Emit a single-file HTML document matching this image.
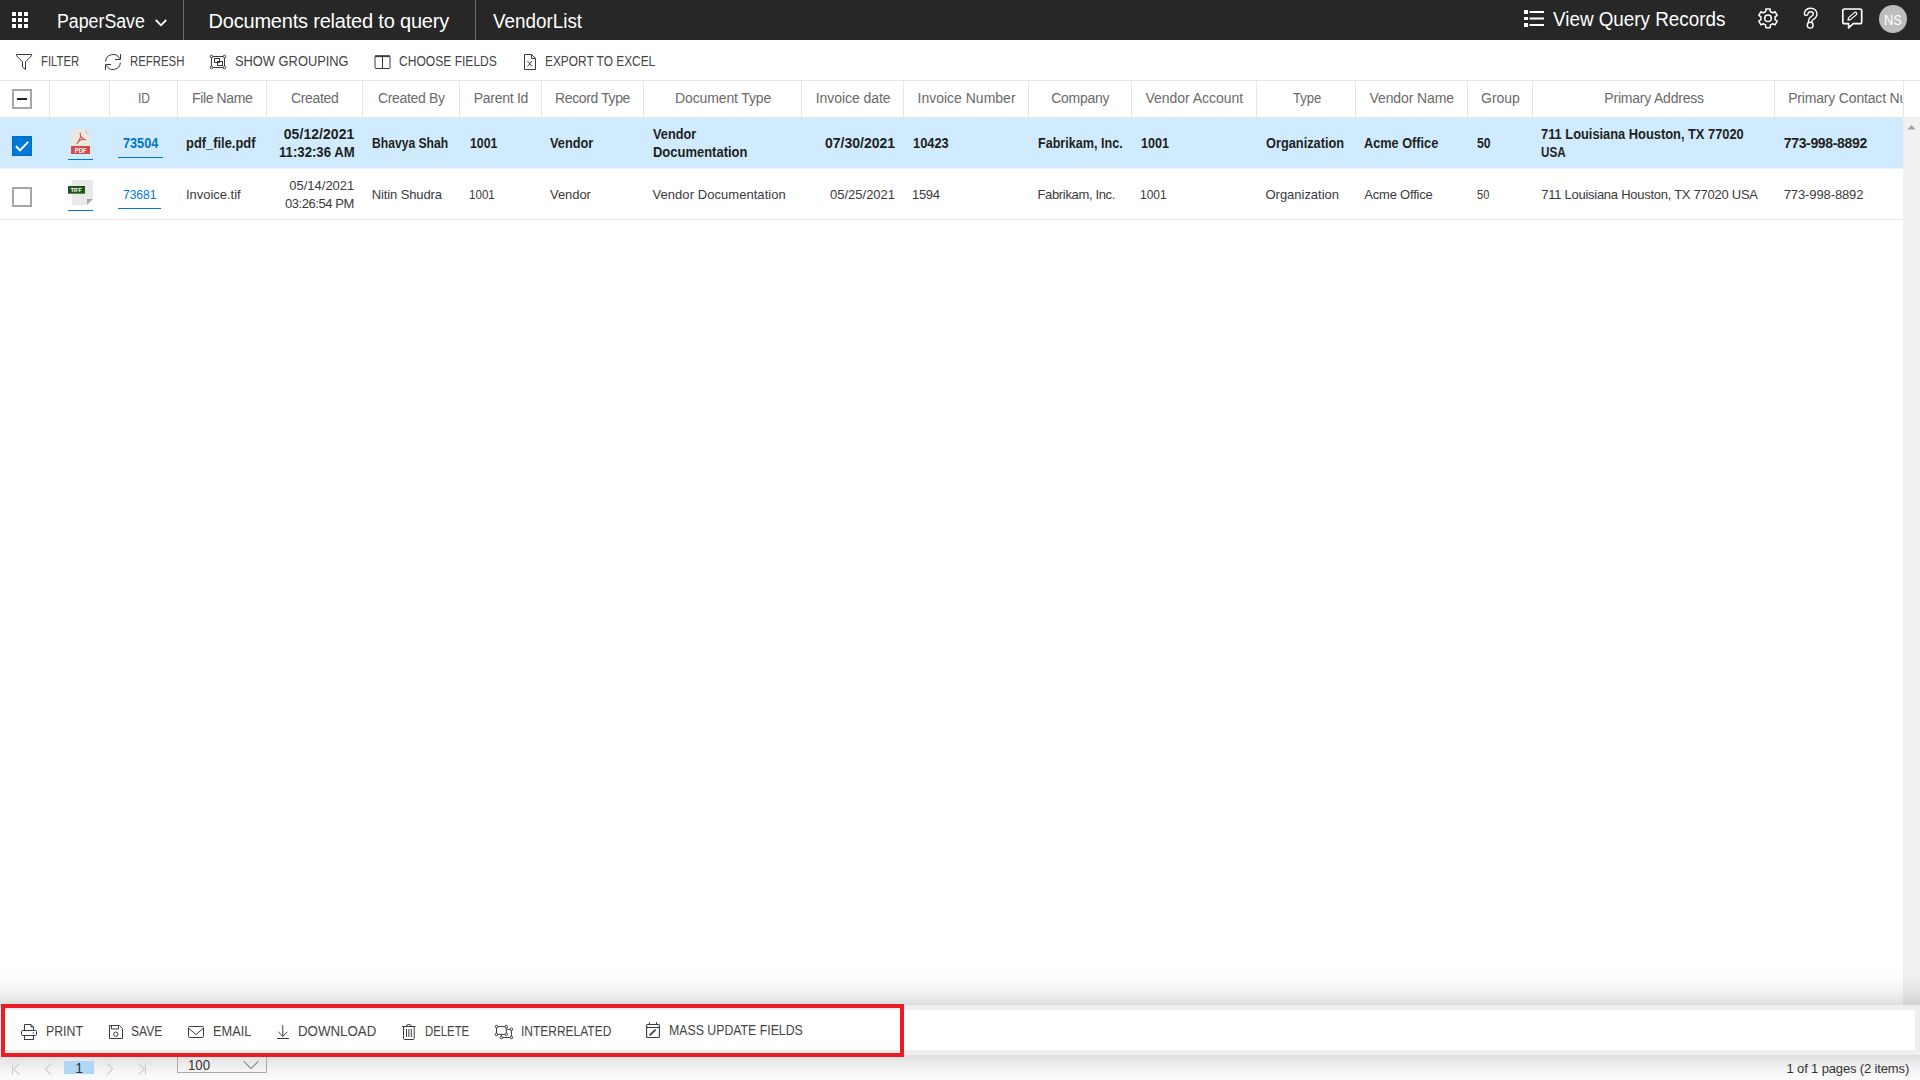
<!DOCTYPE html>
<html>
<head>
<meta charset="utf-8">
<title>PaperSave - Documents related to query</title>
<style>
html,body{margin:0;padding:0;}
body{width:1920px;height:1080px;overflow:hidden;background:#fff;position:relative;font-family:"Liberation Sans",sans-serif;}
.a{position:absolute;}
.t{position:absolute;white-space:pre;line-height:20px;height:20px;transform-origin:0 50%;}
#top{left:0;top:0;width:1920px;height:40px;background:#272727;}
.sep{position:absolute;top:0;width:1px;height:40px;background:#6a6a6a;}
.hb{position:absolute;top:81px;width:1px;height:36px;background:#e6e6e6;}
.hl{position:absolute;height:1px;background:#e6e6e6;}
.cb{position:absolute;box-sizing:border-box;width:20px;height:20px;border:2px solid #a6a6a6;background:#fff;}
.ul{position:absolute;height:1px;background:#0078d7;}
svg{position:absolute;overflow:visible;}
</style>
</head>
<body>
<!-- top bar -->
<div id="top" class="a"></div>
<div class="sep" style="left:183px"></div>
<div class="sep" style="left:475px"></div>
<svg style="left:0;top:0" width="1920" height="40" viewBox="0 0 1920 40">
<rect x="12" y="12" width="4" height="4" fill="#fff"/>
<rect x="18" y="12" width="4" height="4" fill="#fff"/>
<rect x="24" y="12" width="4" height="4" fill="#fff"/>
<rect x="12" y="18" width="4" height="4" fill="#fff"/>
<rect x="18" y="18" width="4" height="4" fill="#fff"/>
<rect x="24" y="18" width="4" height="4" fill="#fff"/>
<rect x="12" y="24" width="4" height="4" fill="#fff"/>
<rect x="18" y="24" width="4" height="4" fill="#fff"/>
<rect x="24" y="24" width="4" height="4" fill="#fff"/>
<path d="M155.8 20 L161 25.3 L166.2 20" fill="none" stroke="#fff" stroke-width="1.8"/>
<rect x="1524" y="10" width="4" height="4" fill="#fff"/>
<rect x="1524" y="17" width="4" height="3" fill="#fff"/>
<rect x="1524" y="23" width="4" height="4" fill="#fff"/>
<rect x="1529.5" y="11" width="14.5" height="2" fill="#fff"/>
<rect x="1529.5" y="17.5" width="14.5" height="2" fill="#fff"/>
<rect x="1529.5" y="24" width="14.5" height="2" fill="#fff"/>
<path d="M1765.66 11.49 L1765.84 8.95 L1770.16 8.95 L1770.34 11.49 L1772.72 12.87 L1775.02 11.75 L1777.18 15.49 L1775.07 16.93 L1775.07 19.67 L1777.18 21.11 L1775.02 24.85 L1772.72 23.73 L1770.34 25.11 L1770.16 27.65 L1765.84 27.65 L1765.66 25.11 L1763.28 23.73 L1760.98 24.85 L1758.82 21.11 L1760.93 19.67 L1760.93 16.93 L1758.82 15.49 L1760.98 11.75 L1763.28 12.87 Z" fill="none" stroke="#fff" stroke-width="1.5" stroke-linejoin="round"/>
<circle cx="1768" cy="18.3" r="3.3" fill="none" stroke="#fff" stroke-width="1.5"/>
<path d="M1806.2 13.6 C1806.6 11 1808.6 10 1810.6 10 C1813.4 10 1815.2 11.8 1815.2 14 C1815.2 16.2 1813.6 17.2 1812 18.2 C1810.6 19.1 1810.2 19.8 1810.2 21.2" fill="none" stroke="#fff" stroke-width="5" stroke-linecap="round" stroke-linejoin="round"/>
<path d="M1806.2 13.6 C1806.6 11 1808.6 10 1810.6 10 C1813.4 10 1815.2 11.8 1815.2 14 C1815.2 16.2 1813.6 17.2 1812 18.2 C1810.6 19.1 1810.2 19.8 1810.2 21.2" fill="none" stroke="#272727" stroke-width="2.2" stroke-linecap="round" stroke-linejoin="round"/>
<circle cx="1810.2" cy="25.2" r="2.9" fill="#272727" stroke="#fff" stroke-width="1.4"/>
<path d="M1844.5 9 H1860 Q1861.7 9 1861.7 10.7 V22 Q1861.7 23.7 1860 23.7 H1853.2 L1848.6 28 V23.7 H1844.5 Q1842.8 23.7 1842.8 22 V10.7 Q1842.8 9 1844.5 9 Z" fill="none" stroke="#fff" stroke-width="1.7" stroke-linejoin="round"/>
<path d="M1848 20.2 L1848.6 17.6 L1854.6 12.4 Q1855.6 11.8 1856.4 12.8 Q1857.2 13.8 1856.4 14.6 L1850.4 19.6 Z" fill="none" stroke="#fff" stroke-width="1.2" stroke-linejoin="round"/>
<circle cx="1893" cy="19" r="14" fill="#bdbdbd"/>
</svg>
<!-- grid header -->
<div class="hl" style="left:0;top:80px;width:1920px"></div>
<div class="hl" style="left:0;top:117px;width:1920px"></div>
<div class="hb" style="left:49px"></div><div class="hb" style="left:109px"></div><div class="hb" style="left:177px"></div><div class="hb" style="left:266px"></div><div class="hb" style="left:362px"></div><div class="hb" style="left:459px"></div><div class="hb" style="left:541px"></div><div class="hb" style="left:643px"></div><div class="hb" style="left:801px"></div><div class="hb" style="left:903px"></div><div class="hb" style="left:1028px"></div><div class="hb" style="left:1131px"></div><div class="hb" style="left:1256px"></div><div class="hb" style="left:1355px"></div><div class="hb" style="left:1467px"></div><div class="hb" style="left:1532px"></div><div class="hb" style="left:1774px"></div><div class="hb" style="left:1903px"></div>
<!-- rows -->
<div class="a" style="left:0;top:118px;width:1903px;height:50px;background:#d0ebfd"></div>
<div class="hl" style="left:0;top:168px;width:1903px;background:#eaf3fa"></div>
<div class="hl" style="left:0;top:219px;width:1903px;background:#e9e9e9"></div>
<!-- scrollbar -->
<div class="a" style="left:1903px;top:118px;width:17px;height:887px;background:#f1f1f1"></div>
<svg style="left:1907px;top:124px" width="9" height="6" viewBox="0 0 9 6"><path d="M0.5 5.5 L4.5 1 L8.5 5.5 Z" fill="#a3a3a3"/></svg>
<!-- checkboxes -->
<div class="cb" style="left:12px;top:89px"></div>
<div class="a" style="left:17px;top:98px;width:10px;height:2px;background:#222"></div>
<div class="a" style="left:12px;top:136px;width:20px;height:20px;background:#0078d7;box-sizing:border-box;border:1px solid #006cc4"></div>
<svg style="left:12px;top:136px" width="20" height="20" viewBox="0 0 20 20"><path d="M3.9 10.3 L8 14.3 L16.2 5.9" fill="none" stroke="#fff" stroke-width="1.9"/></svg>
<div class="cb" style="left:12px;top:187px"></div>
<!-- link underlines -->
<div class="ul" style="left:68px;top:159px;width:25px"></div>
<div class="ul" style="left:118px;top:157px;width:45px"></div>
<div class="ul" style="left:68px;top:210px;width:25px"></div>
<div class="ul" style="left:118px;top:208px;width:43px"></div>
<svg style="left:0;top:118px" width="200" height="102" viewBox="0 118 200 102">
<path d="M71 129 H85 L90 134 V146 H71 Z" fill="#e9e9e1"/>
<path d="M85 129 L90 134 H85 Z" fill="#d9d9cb"/>
<rect x="71" y="146" width="19" height="8" fill="#d14b4b"/>
<path d="M80.2 133.2 C81.2 136 80 139.8 77 143.4 M80.2 133.2 C79.6 136 82 138.8 85.4 139.8 M78 141.8 C80 139.8 83 139 85.4 139.8" fill="none" stroke="#d45555" stroke-width="1.15" stroke-linecap="round"/>
<text x="80.6" y="152.9" font-family="Liberation Sans, sans-serif" font-size="6.6" font-weight="700" fill="#fff" text-anchor="middle" textLength="11.6" lengthAdjust="spacingAndGlyphs">PDF</text>
<path d="M72 180 H93 V199 L87 205 H72 Z" fill="#e9e9e9"/>
<path d="M87 199 H93 L87 205 Z" fill="#a9a9a9"/>
<rect x="68" y="186" width="17" height="7.7" fill="#1f5519"/>
<text x="76.2" y="192.4" font-family="Liberation Sans, sans-serif" font-size="5.8" font-weight="700" fill="#fff" text-anchor="middle" textLength="11" lengthAdjust="spacingAndGlyphs">TIFF</text>
</svg>
<!-- bottom shadow + bar -->
<div class="a" style="left:-60px;top:1005px;width:2040px;height:50px;box-shadow:0 0 34px rgba(0,0,0,0.26)"></div>
<!-- pager -->
<div class="a" style="left:64px;top:1061px;width:30px;height:13px;background:#b2d6f5"></div>
<div class="a" style="left:177px;top:1050px;width:90px;height:23px;box-sizing:border-box;border:1px solid #ababab"></div>
<div class="a" style="left:0;top:1005px;width:1920px;height:50px;background:#eeeeee"></div>
<div class="a" style="left:5px;top:1010px;width:1910px;height:40px;background:#fff"></div>
<svg style="left:0;top:1057px" width="300" height="23" viewBox="0 1057 300 23" fill="none" stroke="#cfcfcf" stroke-width="1.1">
<path d="M12.5 1063 V1075 M19.5 1063.3 L13.5 1069 L19.5 1074.7"/>
<path d="M51 1063.3 L45.5 1069 L51 1074.7"/>
<path d="M107.2 1063.3 L112.7 1069 L107.2 1074.7"/>
<path d="M145.5 1063 V1075 M138.5 1063.3 L144.5 1069 L138.5 1074.7"/>
<path d="M243.6 1061.2 L251 1068.5 L258.4 1061.2" stroke="#555" stroke-width="1"/>
</svg>
<!-- red annotation -->
<div class="a" style="left:1px;top:1004px;width:903px;height:53px;box-sizing:border-box;border:4px solid #ed1c24"></div>
<svg style="left:0;top:1010px" width="1920" height="40" viewBox="0 1010 1920 40" fill="none" stroke="#3b3b3b" stroke-width="1">
<rect x="21.5" y="1030.5" width="15" height="5" rx="1"/>
<path d="M24.5 1030.5 V1024.5 H31 L33.5 1027 V1030.5"/>
<path d="M31 1024.5 V1027 H33.5"/>
<path d="M24.5 1035.5 V1039.5 H33.5 V1035.5" />
<rect x="24.5" y="1035.5" width="9" height="4" fill="#fff"/>
<rect x="32.8" y="1032.2" width="1" height="1.4" fill="#3b3b3b" stroke="none"/>
<path d="M109.5 1025.5 H119.5 L122.5 1028.5 V1038.5 H109.5 Z" stroke-linejoin="round"/>
<path d="M111.5 1025.5 V1029 H118.5 V1025.5"/>
<circle cx="115.8" cy="1034.2" r="2.2"/>
<rect x="188.5" y="1026.5" width="15" height="11" rx="1"/>
<path d="M188.7 1028.3 L196 1034.5 L203.3 1028.3"/>
<path d="M282.8 1025.2 V1036.3 M278.2 1031.8 L282.8 1036.4 L287.4 1031.8 M277 1038.5 H289"/>
<path d="M402 1026.5 H415.6"/>
<path d="M406.3 1026.3 Q406.3 1024.5 408.8 1024.5 Q411.3 1024.5 411.3 1026.3"/>
<path d="M403.5 1026.7 V1038.5 Q403.5 1039.5 404.5 1039.5 H413.2 Q414.2 1039.5 414.2 1038.5 V1026.7"/>
<path d="M406.5 1029 V1037 M408.9 1029 V1037 M411.3 1029 V1037"/>
<rect x="501.4" y="1029.3" width="10" height="8.2"/>
<rect x="496.5" y="1026.6" width="9.8" height="7.8" fill="#fff"/>
<circle cx="496.5" cy="1026.6" r="1.3" fill="#fff"/>
<circle cx="506.3" cy="1026.6" r="1.3" fill="#fff"/>
<circle cx="496.5" cy="1034.4" r="1.3" fill="#fff"/>
<circle cx="506.3" cy="1034.4" r="1.3" fill="#fff"/>
<circle cx="511.4" cy="1029.3" r="1.3" fill="#fff"/>
<circle cx="511.4" cy="1037.5" r="1.3" fill="#fff"/>
<circle cx="501.4" cy="1037.5" r="1.3" fill="#fff"/>
<rect x="646.6" y="1024.5" width="12.8" height="13" rx="1" stroke-width="1.1"/>
<path d="M646.6 1027.5 H659.4" stroke-width="1.1"/>
<path d="M649.4 1022.2 V1024.5 M656.5 1022.2 V1024.5"/>
<path d="M649.6 1035.4 L655.6 1029.6" stroke-width="1.6"/>
</svg>
<svg style="left:0;top:40px" width="1920" height="40" viewBox="0 40 1920 40" fill="none" stroke="#3b3b3b" stroke-width="1">
<path d="M16.5 54.5 H31.5 V55.8 L25.5 61.8 V69.6 L22.5 67 V61.8 L16.5 55.8 Z" stroke-linejoin="miter"/>
<path d="M105.6 61.6 A7.4 7.4 0 0 1 119.6 58.6"/>
<path d="M120.5 54 V59.5 H115"/>
<path d="M120.4 62.6 A7.4 7.4 0 0 1 106.4 65.4"/>
<path d="M105.5 70 V64.5 H111"/>
<rect x="211.5" y="56.5" width="13" height="11"/>
<rect x="214.5" y="58.5" width="5" height="4"/>
<rect x="217.5" y="61.5" width="5" height="4"/>
<circle cx="211.5" cy="56.5" r="1.3" fill="#fff"/>
<circle cx="224.5" cy="56.5" r="1.3" fill="#fff"/>
<circle cx="211.5" cy="67.5" r="1.3" fill="#fff"/>
<circle cx="224.5" cy="67.5" r="1.3" fill="#fff"/>
<rect x="375" y="56" width="15" height="12.5" rx="1"/>
<rect x="375" y="55.3" width="15" height="1.8" fill="#3b3b3b" stroke="none"/>
<path d="M382.5 57 V68.5"/>
<path d="M524.5 54.5 H531.5 L535.5 58.5 V69.5 H524.5 Z" stroke-linejoin="round"/>
<path d="M531.5 54.5 V58.5 H535.5"/>
<path d="M527.5 61 L532 66.5 M532 61 L527.5 66.5"/>
</svg>
<div class="t" style="left:57.11px;top:11px;font-size:20px;color:#fff;transform:scaleX(0.8878);">PaperSave</div>
<div class="t" style="left:208.5px;top:11px;font-size:20px;color:#fff;letter-spacing:-0.2px;">Documents related to query</div>
<div class="t" style="left:493.0px;top:11px;font-size:20px;color:#fff;transform:scaleX(0.9421);">VendorList</div>
<div class="t" style="left:1553.0px;top:9px;font-size:20px;color:#fff;transform:scaleX(0.9415);">View Query Records</div>
<div class="t" style="left:1884.0px;top:9.6px;font-size:15px;color:#fff;transform:scaleX(0.8571);">NS</div>
<div class="t" style="left:41.0px;top:51px;font-size:14px;color:#444;transform:scaleX(0.8085);">FILTER</div>
<div class="t" style="left:129.5px;top:51px;font-size:14px;color:#444;transform:scaleX(0.8134);">REFRESH</div>
<div class="t" style="left:235.0px;top:51px;font-size:14px;color:#444;transform:scaleX(0.9187);">SHOW GROUPING</div>
<div class="t" style="left:398.75px;top:51px;font-size:14px;color:#444;transform:scaleX(0.8618);">CHOOSE FIELDS</div>
<div class="t" style="left:544.5px;top:51px;font-size:14px;color:#444;transform:scaleX(0.85);">EXPORT TO EXCEL</div>
<div class="t" style="left:138.0px;top:88px;font-size:14px;color:#6a6a6a;transform:scaleX(0.8571);">ID</div>
<div class="t" style="left:192.0px;top:88px;font-size:14px;color:#6a6a6a;letter-spacing:-0.375px;">File Name</div>
<div class="t" style="left:291.0px;top:88px;font-size:14px;color:#6a6a6a;letter-spacing:-0.333px;">Created</div>
<div class="t" style="left:378.0px;top:88px;font-size:14px;color:#6a6a6a;letter-spacing:-0.333px;">Created By</div>
<div class="t" style="left:473.75px;top:88px;font-size:14px;color:#6a6a6a;letter-spacing:-0.282px;">Parent Id</div>
<div class="t" style="left:555.0px;top:88px;font-size:14px;color:#6a6a6a;letter-spacing:-0.375px;">Record Type</div>
<div class="t" style="left:675.0px;top:88px;font-size:14px;color:#6a6a6a;letter-spacing:-0.125px;">Document Type</div>
<div class="t" style="left:815.75px;top:88px;font-size:14px;color:#6a6a6a;letter-spacing:-0.069px;">Invoice date</div>
<div class="t" style="left:917.5px;top:88px;font-size:14px;color:#6a6a6a;">Invoice Number</div>
<div class="t" style="left:1051.25px;top:88px;font-size:14px;color:#6a6a6a;letter-spacing:-0.292px;">Company</div>
<div class="t" style="left:1145.5px;top:88px;font-size:14px;color:#6a6a6a;letter-spacing:-0.038px;">Vendor Account</div>
<div class="t" style="left:1292.5px;top:88px;font-size:14px;color:#6a6a6a;transform:scaleX(0.9333);">Type</div>
<div class="t" style="left:1369.6px;top:88px;font-size:14px;color:#6a6a6a;letter-spacing:-0.12px;">Vendor Name</div>
<div class="t" style="left:1481.0px;top:88px;font-size:14px;color:#6a6a6a;">Group</div>
<div class="t" style="left:1604.3px;top:88px;font-size:14px;color:#6a6a6a;letter-spacing:-0.207px;">Primary Address</div>
<div class="t" style="left:123.0px;top:133px;font-size:14px;color:#0074d2;font-weight:700;transform:scaleX(0.9062);">73504</div>
<div class="t" style="left:186.0px;top:133px;font-size:14px;color:#1f1f1f;font-weight:700;transform:scaleX(0.9211);">pdf_file.pdf</div>
<div class="t" style="left:283.75px;top:124px;font-size:14px;color:#1f1f1f;font-weight:700;letter-spacing:0.056px;">05/12/2021</div>
<div class="t" style="left:279.0px;top:142px;font-size:14px;color:#1f1f1f;font-weight:700;transform:scaleX(0.9406);">11:32:36 AM</div>
<div class="t" style="left:371.75px;top:133px;font-size:14px;color:#1f1f1f;font-weight:700;transform:scaleX(0.8665);">Bhavya Shah</div>
<div class="t" style="left:469.5px;top:133px;font-size:14px;color:#1f1f1f;font-weight:700;transform:scaleX(0.879);">1001</div>
<div class="t" style="left:550.0px;top:133px;font-size:14px;color:#1f1f1f;font-weight:700;transform:scaleX(0.9115);">Vendor</div>
<div class="t" style="left:652.5px;top:124px;font-size:14px;color:#1f1f1f;font-weight:700;transform:scaleX(0.9115);">Vendor</div>
<div class="t" style="left:652.5px;top:142px;font-size:14px;color:#1f1f1f;font-weight:700;transform:scaleX(0.9265);">Documentation</div>
<div class="t" style="left:825.0px;top:133px;font-size:14px;color:#1f1f1f;font-weight:700;">07/30/2021</div>
<div class="t" style="left:913.0px;top:133px;font-size:14px;color:#1f1f1f;font-weight:700;transform:scaleX(0.9167);">10423</div>
<div class="t" style="left:1037.5px;top:133px;font-size:14px;color:#1f1f1f;font-weight:700;transform:scaleX(0.8989);">Fabrikam, Inc.</div>
<div class="t" style="left:1141.25px;top:133px;font-size:14px;color:#1f1f1f;font-weight:700;transform:scaleX(0.8952);">1001</div>
<div class="t" style="left:1265.5px;top:133px;font-size:14px;color:#1f1f1f;font-weight:700;transform:scaleX(0.9128);">Organization</div>
<div class="t" style="left:1364.25px;top:133px;font-size:14px;color:#1f1f1f;font-weight:700;transform:scaleX(0.9085);">Acme Office</div>
<div class="t" style="left:1476.75px;top:133px;font-size:14px;color:#1f1f1f;font-weight:700;transform:scaleX(0.875);">50</div>
<div class="t" style="left:1541.25px;top:124px;font-size:14px;color:#1f1f1f;font-weight:700;transform:scaleX(0.9174);">711 Louisiana Houston, TX 77020</div>
<div class="t" style="left:1541.25px;top:142px;font-size:14px;color:#1f1f1f;font-weight:700;transform:scaleX(0.8333);">USA</div>
<div class="t" style="left:1783.75px;top:133px;font-size:14px;color:#1f1f1f;font-weight:700;letter-spacing:-0.341px;">773-998-8892</div>
<div class="t" style="left:123.0px;top:185px;font-size:13px;color:#0074d2;transform:scaleX(0.9236);">73681</div>
<div class="t" style="left:186.0px;top:185px;font-size:13px;color:#3a3a3a;letter-spacing:-0.025px;">Invoice.tif</div>
<div class="t" style="left:289.25px;top:176px;font-size:13px;color:#3a3a3a;">05/14/2021</div>
<div class="t" style="left:285.0px;top:194px;font-size:13px;color:#3a3a3a;letter-spacing:-0.45px;">03:26:54 PM</div>
<div class="t" style="left:371.75px;top:185px;font-size:13px;color:#3a3a3a;letter-spacing:-0.113px;">Nitin Shudra</div>
<div class="t" style="left:468.61px;top:185px;font-size:13px;color:#3a3a3a;transform:scaleX(0.8929);">1001</div>
<div class="t" style="left:550.0px;top:185px;font-size:13px;color:#3a3a3a;letter-spacing:-0.05px;">Vendor</div>
<div class="t" style="left:652.5px;top:185px;font-size:13px;color:#3a3a3a;letter-spacing:0.053px;">Vendor Documentation</div>
<div class="t" style="left:830.0px;top:185px;font-size:13px;color:#3a3a3a;">05/25/2021</div>
<div class="t" style="left:912.0px;top:185px;font-size:13px;color:#3a3a3a;letter-spacing:-0.333px;">1594</div>
<div class="t" style="left:1037.5px;top:185px;font-size:13px;color:#3a3a3a;letter-spacing:-0.346px;">Fabrikam, Inc.</div>
<div class="t" style="left:1140.33px;top:185px;font-size:13px;color:#3a3a3a;transform:scaleX(0.9196);">1001</div>
<div class="t" style="left:1265.5px;top:185px;font-size:13px;color:#3a3a3a;letter-spacing:-0.022px;">Organization</div>
<div class="t" style="left:1364.25px;top:185px;font-size:13px;color:#3a3a3a;letter-spacing:-0.2px;">Acme Office</div>
<div class="t" style="left:1476.75px;top:185px;font-size:13px;color:#3a3a3a;transform:scaleX(0.85);">50</div>
<div class="t" style="left:1541.25px;top:185px;font-size:13px;color:#3a3a3a;letter-spacing:-0.265px;">711 Louisiana Houston, TX 77020 USA</div>
<div class="t" style="left:1783.75px;top:185px;font-size:13px;color:#3a3a3a;letter-spacing:-0.113px;">773-998-8892</div>
<div class="t" style="left:45.6px;top:1021px;font-size:14px;color:#444;transform:scaleX(0.8786);">PRINT</div>
<div class="t" style="left:131.0px;top:1021px;font-size:14px;color:#444;transform:scaleX(0.8611);">SAVE</div>
<div class="t" style="left:212.5px;top:1021px;font-size:14px;color:#444;transform:scaleX(0.9119);">EMAIL</div>
<div class="t" style="left:297.5px;top:1021px;font-size:14px;color:#444;transform:scaleX(0.9488);">DOWNLOAD</div>
<div class="t" style="left:424.5px;top:1021px;font-size:14px;color:#444;transform:scaleX(0.8111);">DELETE</div>
<div class="t" style="left:521.3px;top:1021px;font-size:14px;color:#444;transform:scaleX(0.8557);">INTERRELATED</div>
<div class="t" style="left:669.2px;top:1020px;font-size:14px;color:#444;transform:scaleX(0.8789);">MASS UPDATE FIELDS</div>
<div class="t" style="left:75.3px;top:1058.4px;font-size:14px;color:#333;">1</div>
<div class="t" style="left:187.81px;top:1055px;font-size:14px;color:#333;transform:scaleX(0.9413);">100</div>
<div class="t" style="left:1786.5px;top:1059px;font-size:13px;color:#333;letter-spacing:-0.143px;">1 of 1 pages (2 items)</div>
<div class="a" style="left:1775px;top:81px;width:128px;height:36px;overflow:hidden"><div class="t" style="left:13.2px;top:7px;font-size:14px;color:#6a6a6a;letter-spacing:-0.18px">Primary Contact Number</div></div>
</body>
</html>
